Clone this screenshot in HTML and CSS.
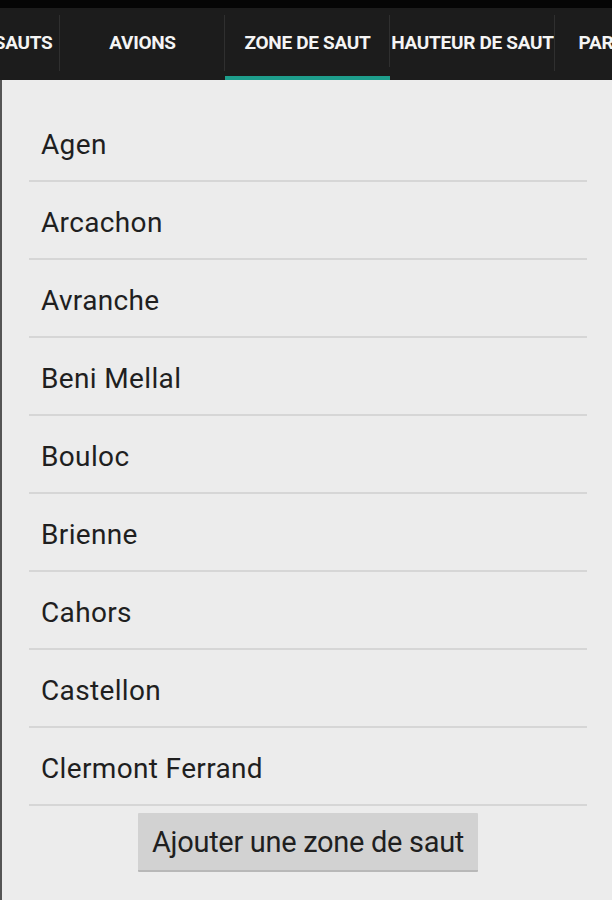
FILE: index.html
```html
<!DOCTYPE html>
<html lang="fr">
<head>
  <meta charset="UTF-8">
  <meta name="viewport" content="width=device-width, initial-scale=1.0">
  <title>Zones de saut</title>
  <link rel="stylesheet" href="styles.css">
</head>
<body>
  <div class="app">
    <div class="status-strip"></div>
    <nav class="tab-bar">
      <div class="tab-strip">
        <div class="tab">LISTE DES SAUTS</div>
        <div class="tab">AVIONS</div>
        <div class="tab active">ZONE DE SAUT</div>
        <div class="tab">HAUTEUR DE SAUT</div>
        <div class="tab">PARACHUTES</div>
      </div>
    </nav>

    <main class="content">
      <ul class="zone-list">
        <li class="zone-item">Agen</li>
        <li class="zone-item">Arcachon</li>
        <li class="zone-item">Avranche</li>
        <li class="zone-item">Beni Mellal</li>
        <li class="zone-item">Bouloc</li>
        <li class="zone-item">Brienne</li>
        <li class="zone-item">Cahors</li>
        <li class="zone-item">Castellon</li>
        <li class="zone-item">Clermont Ferrand</li>
      </ul>
      <div class="actions">
        <button type="button" class="add-button">Ajouter une zone de saut</button>
      </div>
    </main>
  </div>
</body>
</html>
```

FILE: styles.css
```css
:root {
  --color-bar: #1c1c1c;
  --color-bar-top: #050505;
  --color-tab-text: #f4f4f4;
  --color-tab-divider: #2f2f2f;
  --color-accent: #1e9e8c;
  --color-bg: #ececec;
  --color-text: #1f1f1f;
  --color-divider: #d6d6d6;
  --color-button: #d2d2d2;

  --font-primary: Roboto, "Liberation Sans", Arial, sans-serif;
}

* {
  box-sizing: border-box;
  margin: 0;
  padding: 0;
}

body {
  font-family: var(--font-primary);
  background-color: var(--color-bg);
  color: var(--color-text);
  height: 100vh;
  overflow: hidden;
}

.app {
  display: flex;
  flex-direction: column;
  height: 100%;
}

/* Top bar with tabs */
.status-strip {
  height: 8px;
  background-color: var(--color-bar-top);
}

.tab-bar {
  height: 72px;
  background-color: var(--color-bar);
  overflow: hidden;
}

.tab-strip {
  display: flex;
  height: 100%;
  margin-left: -105px;
}

.tab {
  position: relative;
  flex: 0 0 165px;
  display: flex;
  align-items: center;
  justify-content: center;
  padding-bottom: 3px;
  color: var(--color-tab-text);
  font-size: 19px;
  font-weight: 700;
  letter-spacing: -0.3px;
  white-space: nowrap;
  overflow: hidden;
}

.tab::after {
  content: "";
  position: absolute;
  right: 0;
  top: 7px;
  bottom: 9px;
  width: 1px;
  background-color: var(--color-tab-divider);
}

.tab.active {
  border-bottom: 4px solid var(--color-accent);
  padding-bottom: 0;
}

/* List */
.content {
  flex: 1;
  display: flex;
  flex-direction: column;
  padding: 24px 25px 0 27px;
  border-left: 2px solid #555;
}

.zone-list {
  list-style: none;
}

.zone-item {
  height: 78px;
  display: flex;
  align-items: center;
  padding-left: 12px;
  padding-top: 5px;
  font-size: 28px;
  letter-spacing: 0.35px;
  border-bottom: 2px solid var(--color-divider);
}

.actions {
  display: flex;
  justify-content: center;
  padding-top: 7px;
}

.add-button {
  width: 340px;
  height: 59px;
  font-family: var(--font-primary);
  font-size: 29px;
  color: var(--color-text);
  background-color: var(--color-button);
  border: none;
  border-bottom: 2px solid #b8b8b8;
  border-radius: 1px;
  letter-spacing: -0.3px;
}
```
